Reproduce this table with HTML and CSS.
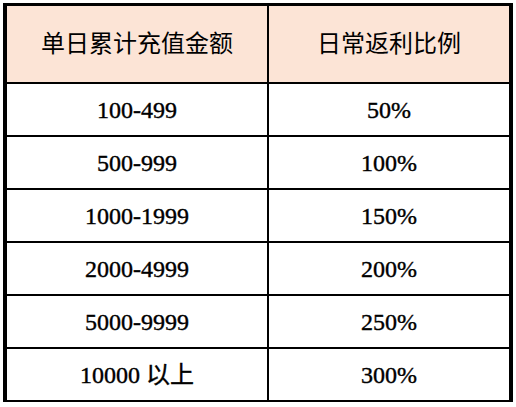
FILE: index.html
```html
<!DOCTYPE html>
<html lang="zh-CN">
<head>
<meta charset="utf-8">
<title>日常返利比例</title>
<link rel="stylesheet" href="styles.css">
</head>
<body>
<div class="table">
  <div class="cell head">单日累计充值金额</div>
  <div class="cell head">日常返利比例</div>
  <div class="cell">100-499</div>
  <div class="cell">50%</div>
  <div class="cell">500-999</div>
  <div class="cell">100%</div>
  <div class="cell">1000-1999</div>
  <div class="cell">150%</div>
  <div class="cell">2000-4999</div>
  <div class="cell">200%</div>
  <div class="cell">5000-9999</div>
  <div class="cell">250%</div>
  <div class="cell">10000 以上</div>
  <div class="cell">300%</div>
</div>
</body>
</html>
```
FILE: styles.css
```css
html, body {
  margin: 0;
  padding: 0;
  background: #fff;
}
body {
  padding: 3px 0 0 3px;
  font-family: "Liberation Serif", "Noto Sans CJK SC", serif;
  color: #000;
}
.table {
  display: inline-grid;
  grid-template-columns: 260px 240px;
  grid-template-rows: 76px repeat(6, 51px);
  gap: 2px;
  background: #000;
  border-style: solid;
  border-color: #000;
  border-width: 3px 4px 2px 4px;
}
.cell {
  background: #fff;
  display: flex;
  align-items: center;
  justify-content: center;
  font-size: 24px;
  line-height: 1;
  -webkit-text-stroke: 0.4px #000;
}
.head {
  background: #fce4d6;
  -webkit-text-stroke: 0;
}
```
